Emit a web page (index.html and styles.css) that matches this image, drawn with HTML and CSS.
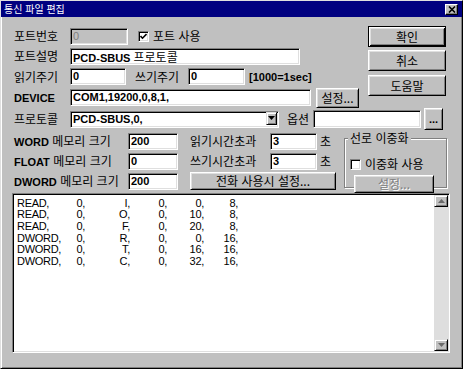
FILE: index.html
```html
<!DOCTYPE html>
<html lang="ko">

<head>
    <meta charset="UTF-8">
    <title>통신 파일 편집</title>
    <link rel="stylesheet" href="styles.css">
</head>

<body>
    <div class="window">
        <div class="titlebar">
            <span class="title">통신 파일 편집</span>
            <span class="close-btn">
                <svg width="8" height="7" viewBox="0 0 8 7"><path d="M1 0.5 L7 6.5 M7 0.5 L1 6.5" stroke="#000" stroke-width="1.6"/></svg>
            </span>
        </div>

        <div class="content">
            <div class="top">
                <div class="fields">
                    <div class="row r1">
                        <span class="lbl col-lbl">포트번호</span>
                        <div class="field disabled w-port">0</div>
                        <span class="check port-check">
                            <svg width="7" height="7" viewBox="0 0 7 7"><polyline points="0.5,3 2.5,5.2 6.5,1" fill="none" stroke="#000" stroke-width="1.6"/></svg>
                        </span>
                        <span class="lbl check-text">포트 사용</span>
                    </div>
                    <div class="row r2">
                        <span class="lbl col-lbl">포트설명</span>
                        <div class="field w-desc">PCD-SBUS <span class="kr">프로토콜</span></div>
                    </div>
                    <div class="row r3">
                        <span class="lbl col-lbl">읽기주기</span>
                        <div class="field w-read">0</div>
                        <span class="lbl write-lbl">쓰기주기</span>
                        <div class="field w-write">0</div>
                        <span class="hint">[1000=1sec]</span>
                    </div>
                    <div class="row r4">
                        <span class="lbl col-lbl"><b>DEVICE</b></span>
                        <div class="field w-device">COM1,19200,0,8,1,</div>
                        <button class="btn btn-set">설정...</button>
                    </div>
                </div>

                <div class="buttons">
                    <button class="btn btn-side default">확인</button>
                    <button class="btn btn-side">취소</button>
                    <button class="btn btn-side">도움말</button>
                </div>
            </div>

            <div class="row r5">
                <span class="lbl col-lbl">프로토콜</span>
                <div class="field select">
                    <span>PCD-SBUS,0,</span>
                    <span class="arrow">
                        <svg width="7" height="4" viewBox="0 0 7 4"><polygon points="0,0 7,0 3.5,4" fill="#000"/></svg>
                    </span>
                </div>
                <span class="lbl opt-lbl">옵션</span>
                <div class="field w-opt"></div>
                <button class="btn btn-dots">...</button>
            </div>

            <div class="bottom">
                <div class="bleft">
                    <div class="row r-mem">
                        <span class="lbl mem-lbl"><b>WORD</b> 메모리 크기</span>
                        <div class="field w-mem">200</div>
                        <span class="lbl time-lbl">읽기시간초과</span>
                        <div class="field w-time">3</div>
                        <span class="lbl sec">초</span>
                    </div>
                    <div class="row r-mem">
                        <span class="lbl mem-lbl"><b>FLOAT</b> 메모리 크기</span>
                        <div class="field w-mem">0</div>
                        <span class="lbl time-lbl">쓰기시간초과</span>
                        <div class="field w-time">3</div>
                        <span class="lbl sec">초</span>
                    </div>
                    <div class="row r-mem">
                        <span class="lbl mem-lbl"><b>DWORD</b> 메모리 크기</span>
                        <div class="field w-mem">200</div>
                        <button class="btn btn-phone">전화 사용시 설정...</button>
                    </div>
                </div>

                <div class="group">
                    <span class="lbl group-title">선로 이중화</span>
                    <div class="row group-check">
                        <span class="check"></span>
                        <span class="lbl check-text">이중화 사용</span>
                    </div>
                    <button class="btn btn-disabled">설정...</button>
                </div>
            </div>

            <div class="listbox">
                <div class="lines">
                    <div class="line"><span>READ,</span><span>0,</span><span>I,</span><span>0,</span><span>0,</span><span>8,</span></div>
                    <div class="line"><span>READ,</span><span>0,</span><span>O,</span><span>0,</span><span>10,</span><span>8,</span></div>
                    <div class="line"><span>READ,</span><span>0,</span><span>F,</span><span>0,</span><span>20,</span><span>8,</span></div>
                    <div class="line"><span>DWORD,</span><span>0,</span><span>R,</span><span>0,</span><span>0,</span><span>16,</span></div>
                    <div class="line"><span>DWORD,</span><span>0,</span><span>T,</span><span>0,</span><span>16,</span><span>16,</span></div>
                    <div class="line"><span>DWORD,</span><span>0,</span><span>C,</span><span>0,</span><span>32,</span><span>16,</span></div>
                </div>
                <div class="scrollbar">
                    <span class="sb-btn">
                        <svg width="7" height="4" viewBox="0 0 7 4"><polygon points="0,4 7,4 3.5,0" fill="#6a6a6a"/></svg>
                    </span>
                    <span class="sb-track"></span>
                    <span class="sb-btn">
                        <svg width="7" height="4" viewBox="0 0 7 4"><polygon points="0,0 7,0 3.5,4" fill="#6a6a6a"/></svg>
                    </span>
                </div>
            </div>
        </div>
    </div>
</body>

</html>
```

FILE: styles.css
```css
html,
body {
    margin: 0;
}

body {
    font-family: "Liberation Sans", "Noto Sans CJK KR", sans-serif;
    font-size: 12px;
    background: #c0c0c0;
}

.window {
    width: 463px;
    height: 369px;
    box-sizing: border-box;
    background: #c0c0c0;
    border: 1px solid;
    border-color: #dfdfdf #000 #000 #dfdfdf;
    box-shadow: inset 1px 1px #fff, inset -1px -1px #808080;
}

/* title bar */
.titlebar {
    height: 16px;
    background: #000080;
    color: #fff;
    display: flex;
    align-items: center;
    justify-content: space-between;
    padding: 0 4px 0 3px;
}

.title {
    font-family: "Noto Sans CJK KR", sans-serif;
    font-size: 10px;
    line-height: 12px;
}

.close-btn {
    width: 13px;
    height: 11px;
    box-sizing: border-box;
    background: #c0c0c0;
    border: 1px solid;
    border-color: #fff #000 #000 #fff;
    box-shadow: inset -1px -1px #808080;
    display: flex;
    align-items: center;
    justify-content: center;
}

.content {
    padding: 0 12px 0 11px;
}

/* generic controls */
.row {
    display: flex;
    align-items: center;
}

.lbl {
    font-family: "Noto Sans CJK KR", sans-serif;
    font-size: 12px;
    line-height: 14px;
    white-space: nowrap;
    color: #000;
}

.lbl b,
.hint {
    font-family: "Liberation Sans", sans-serif;
    font-size: 11px;
    font-weight: bold;
}

.field {
    height: 17px;
    box-sizing: border-box;
    background: #fff;
    border: 1px solid;
    border-color: #808080 #fff #fff #808080;
    box-shadow: inset 1px 1px #000, inset -1px -1px #dfdfdf;
    padding: 0 2px;
    font-family: "Liberation Sans", sans-serif;
    font-size: 11px;
    font-weight: bold;
    line-height: 15px;
    white-space: nowrap;
    overflow: hidden;
}

.field .kr {
    font-family: "Noto Sans CJK KR", sans-serif;
    font-size: 12px;
    font-weight: normal;
}

.field.disabled {
    background: #c0c0c0;
    color: #808080;
    font-weight: normal;
}

.check {
    width: 11px;
    height: 11px;
    box-sizing: border-box;
    background: #fff;
    border: 1px solid;
    border-color: #808080 #fff #fff #808080;
    box-shadow: inset 1px 1px #000, inset -1px -1px #dfdfdf;
    display: flex;
    align-items: center;
    justify-content: center;
}

.check-text {
    margin-left: 4px;
}

.btn {
    box-sizing: border-box;
    background: #c0c0c0;
    border: 1px solid;
    border-color: #fff #000 #000 #fff;
    box-shadow: inset 1px 1px #dfdfdf, inset -1px -1px #808080;
    font-family: "Noto Sans CJK KR", sans-serif;
    font-size: 12px;
    line-height: 14px;
    color: #000;
    padding: 0;
    margin: 0;
}

/* top section */
.top {
    display: flex;
}

.fields {
    width: 356px;
    padding-top: 9px;
}

.r1,
.r2 {
    height: 20px;
}

.r3,
.r4 {
    height: 21px;
}

.col-lbl {
    width: 58px;
    box-sizing: border-box;
    padding-left: 2px;
}

.w-port {
    width: 58px;
}

.port-check {
    margin-left: 10px;
}

.w-desc {
    width: 230px;
}

.w-read {
    width: 56px;
}

.write-lbl {
    margin-left: 9px;
    width: 48px;
}

.w-write {
    width: 57px;
    margin-left: 5px;
}

.hint {
    margin-left: 4px;
}

.w-device {
    width: 241px;
}

.btn-set {
    width: 43px;
    height: 20px;
    margin-left: 5px;
}

.buttons {
    width: 78px;
    padding-top: 9px;
    display: flex;
    flex-direction: column;
}

.btn-side {
    height: 21px;
}

.btn-side + .btn-side {
    margin-top: 3px;
}

.btn-side:last-child {
    margin-top: 4px;
}

.btn.default {
    border-color: #000;
    box-shadow: inset 1px 1px #fff, inset -1px -1px #000, inset 2px 2px #dfdfdf, inset -2px -2px #808080;
}

/* protocol row */
.r5 {
    height: 22px;
}

.select {
    width: 209px;
    display: flex;
    justify-content: space-between;
    padding-right: 1px;
}

.select .arrow {
    width: 11px;
    height: 13px;
    margin-top: 0;
    box-sizing: border-box;
    background: #c0c0c0;
    border: 1px solid;
    border-color: #dfdfdf #000 #000 #dfdfdf;
    box-shadow: inset 1px 1px #fff, inset -1px -1px #808080;
    display: flex;
    align-items: center;
    justify-content: center;
}

.opt-lbl {
    margin-left: 8px;
}

.w-opt {
    width: 108px;
    height: 18px;
    margin-left: 4px;
}

.btn-dots {
    width: 19px;
    height: 22px;
    margin-left: 3px;
    font-family: "Liberation Sans", sans-serif;
    font-size: 11px;
    font-weight: bold;
}

/* bottom section */
.bottom {
    display: flex;
    height: 63px;
    padding-top: 1px;
    box-sizing: border-box;
}

.bleft {
    width: 332px;
}

.r-mem {
    height: 20px;
}

.mem-lbl {
    width: 116px;
    box-sizing: border-box;
    padding-left: 2px;
}

.w-mem {
    width: 50px;
}

.time-lbl {
    margin-left: 12px;
    width: 80px;
}

.w-time {
    width: 47px;
}

.sec {
    margin-left: 3px;
}

.btn-phone {
    width: 146px;
    height: 18px;
    margin-left: 12px;
}

.group {
    width: 103px;
    height: 50px;
    box-sizing: border-box;
    margin-top: 7px;
    border: 1px solid #808080;
    box-shadow: inset 1px 1px #fff, 1px 1px #fff;
}

.group-title {
    display: inline-block;
    margin: -7px 0 0 3px;
    padding: 0 2px;
    line-height: 12px;
    background: #c0c0c0;
    vertical-align: top;
}

.group-check {
    height: 14px;
    margin: 4px 0 0 5px;
}

.btn-disabled {
    display: block;
    width: 80px;
    height: 18px;
    margin: 4px 0 0 9px;
    color: #808080;
    text-shadow: 1px 1px #fff;
}

/* list box */
.listbox {
    height: 160px;
    box-sizing: border-box;
    display: flex;
    background: #fff;
    border: 1px solid;
    border-color: #808080 #fff #fff #808080;
    box-shadow: inset 1px 1px #000, inset -1px -1px #dfdfdf;
    padding: 1px;
}

.lines {
    flex: 1;
    padding: 2.5px 0 0 3px;
    font-family: "Liberation Sans", sans-serif;
    font-size: 11px;
    line-height: 11.7px;
    letter-spacing: -0.3px;
}

.line {
    display: grid;
    grid-template-columns: 50px 18px 45px 37px 37px 34px;
    height: 11.7px;
    justify-items: end;
}

.line span:first-child {
    justify-self: start;
}

.scrollbar {
    width: 14px;
    display: flex;
    flex-direction: column;
    background: #dedede;
}

.sb-btn {
    height: 12px;
    box-sizing: border-box;
    background: #c0c0c0;
    border: 1px solid;
    border-color: #dfdfdf #000 #000 #dfdfdf;
    box-shadow: inset 1px 1px #fff, inset -1px -1px #808080;
    display: flex;
    align-items: center;
    justify-content: center;
}

.sb-track {
    flex: 1;
}
```
